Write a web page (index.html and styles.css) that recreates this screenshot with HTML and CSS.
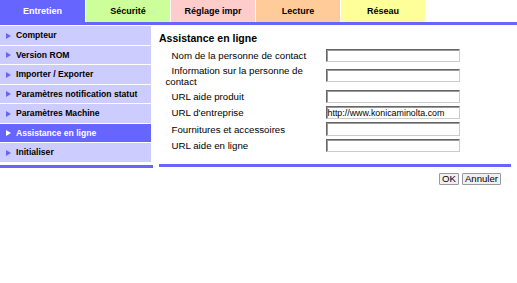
FILE: index.html
```html
<!DOCTYPE html>
<html lang="fr">
<head>
    <meta charset="UTF-8">
    <title>Assistance en ligne</title>
    <link rel="stylesheet" href="styles.css">
</head>
<body>

    <div class="tabs">
        <div class="tab tab-active">Entretien</div>
        <div class="tab tab-green">Sécurité</div>
        <div class="tab tab-pink">Réglage impr</div>
        <div class="tab tab-orange">Lecture</div>
        <div class="tab tab-yellow">Réseau</div>
    </div>
    <div class="tab-line"></div>

    <div class="main">
        <div class="sidebar">
            <div class="menu-item">Compteur</div>
            <div class="menu-item">Version ROM</div>
            <div class="menu-item">Importer / Exporter</div>
            <div class="menu-item">Paramètres notification statut</div>
            <div class="menu-item">Paramètres Machine</div>
            <div class="menu-item menu-active">Assistance en ligne</div>
            <div class="menu-item">Initialiser</div>
            <div class="side-line"></div>
        </div>

        <div class="content">
            <h2>Assistance en ligne</h2>
            <table class="form-table">
                <tr>
                    <td class="label">Nom de la personne de contact</td>
                    <td class="field"><input type="text"></td>
                </tr>
                <tr>
                    <td class="label">Information sur la personne de contact</td>
                    <td class="field"><input type="text"></td>
                </tr>
                <tr>
                    <td class="label">URL aide produit</td>
                    <td class="field"><input type="text"></td>
                </tr>
                <tr>
                    <td class="label">URL d'entreprise</td>
                    <td class="field"><input type="text" value="http://www.konicaminolta.com"></td>
                </tr>
                <tr>
                    <td class="label">Fournitures et accessoires</td>
                    <td class="field"><input type="text"></td>
                </tr>
                <tr>
                    <td class="label">URL aide en ligne</td>
                    <td class="field"><input type="text"></td>
                </tr>
            </table>
            <div class="content-line"></div>
            <div class="buttons">
                <button>OK</button>
                <button>Annuler</button>
            </div>
        </div>
    </div>

</body>
</html>
```

FILE: styles.css
```css
body {
    font-family: "Liberation Sans", Arial, sans-serif;
    background-color: white;
    color: black;
    margin: 0;
    padding: 0;
}

.tabs {
    display: flex;
    gap: 1px;
    height: 22px;
}

.tab {
    width: 84px;
    font-size: 9px;
    font-weight: bold;
    line-height: 22px;
    text-align: center;
}

.tab-active {
    width: 85px;
    background-color: #6666ff;
    color: white;
}

.tab-green {
    background-color: #ccff99;
}

.tab-pink {
    background-color: #ffcccc;
}

.tab-orange {
    background-color: #ffcc99;
}

.tab-yellow {
    background-color: #ffff99;
}

.tab-line {
    height: 3px;
    background-color: #6666ff;
}

.main {
    display: flex;
    gap: 8px;
    padding-top: 1px;
}

.sidebar {
    width: 151px;
}

.menu-item {
    height: 18.5px;
    margin-bottom: 1px;
    background-color: #ccccff;
    font-size: 8.6px;
    font-weight: bold;
    line-height: 18.5px;
    padding-left: 16px;
    position: relative;
}

.menu-item::before {
    content: "";
    position: absolute;
    left: 6px;
    top: 6.5px;
    border-top: 3px solid transparent;
    border-bottom: 3px solid transparent;
    border-left: 5px solid #6666ff;
}

.menu-active {
    background-color: #6666ff;
    color: white;
}

.menu-active::before {
    border-left-color: white;
}

.side-line {
    height: 3px;
    width: 153px;
    margin-top: 3.5px;
    background-color: #6666ff;
}

.content {
    width: 352px;
}

h2 {
    margin: 6px 0 0 0;
    font-size: 10.5px;
    line-height: 13px;
}

.form-table {
    width: 352px;
    margin-top: 2px;
    border-collapse: collapse;
    table-layout: fixed;
}

.label {
    width: 159px;
    padding: 1.5px 0 1.5px 6.5px;
    font-size: 9.7px;
    line-height: 11px;
    text-indent: 6px;
    vertical-align: middle;
}

.field {
    padding: 1.5px 0 1.5px 1px;
    vertical-align: middle;
}

input {
    display: block;
    box-sizing: border-box;
    width: 134px;
    height: 13.3px;
    margin: 0;
    padding: 0 1px;
    border: 1px solid;
    border-color: #666 #ccc #ccc #666;
    box-shadow: inset 1px 1px 0 #999;
    font-family: "Liberation Sans", Arial, sans-serif;
    font-size: 8.9px;
}

.content-line {
    height: 3px;
    margin-top: 11px;
    background-color: #6666ff;
}

.buttons {
    display: flex;
    justify-content: flex-end;
    gap: 3px;
    margin-top: 6px;
    padding-right: 10px;
}

button {
    height: 12px;
    padding: 0 2px;
    background-color: #f0f0f0;
    border: 1px solid #999;
    border-radius: 1px;
    font-family: "Liberation Sans", Arial, sans-serif;
    font-size: 9.6px;
    line-height: 10px;
}
```
